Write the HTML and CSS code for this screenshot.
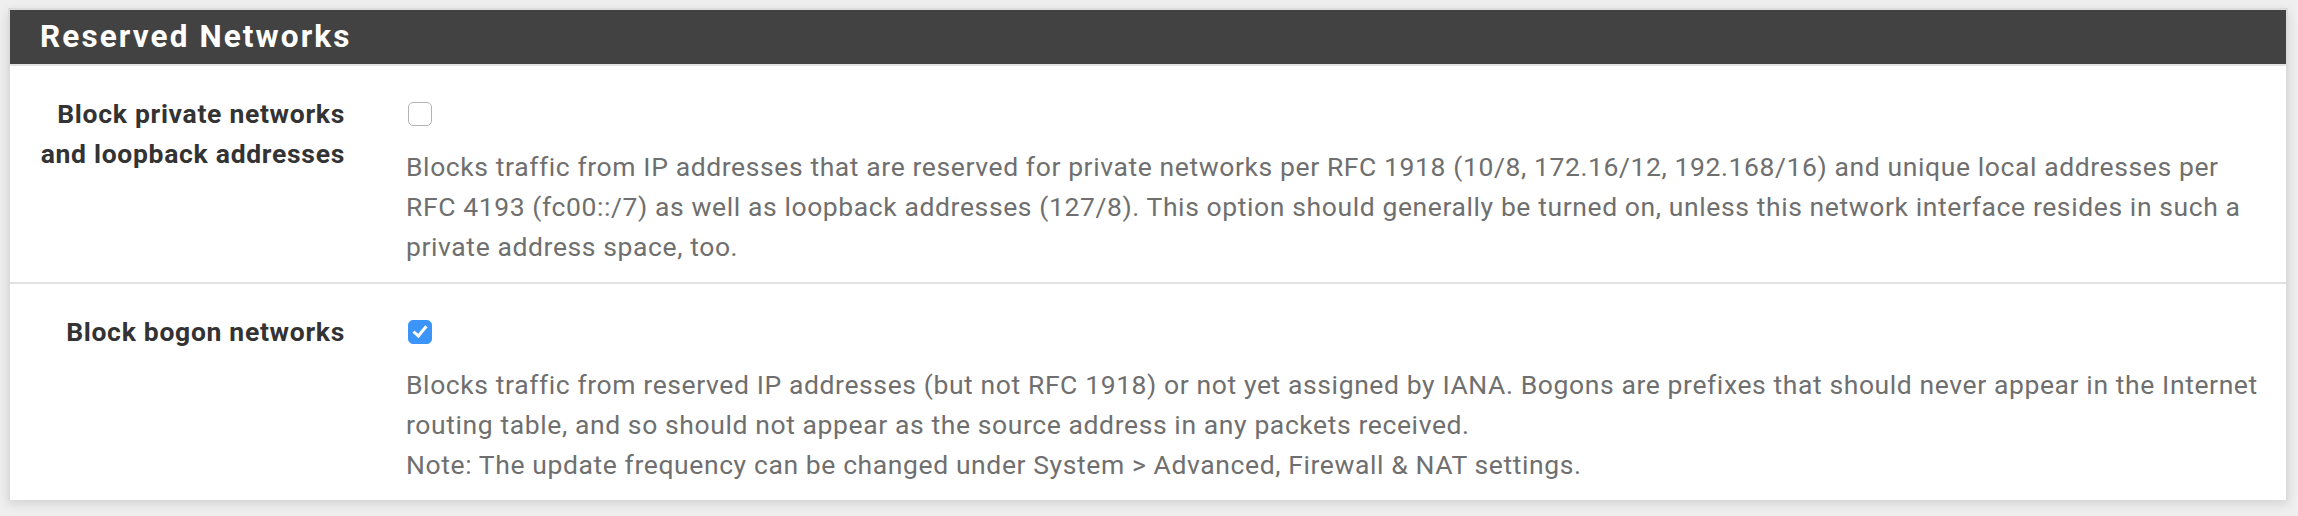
FILE: index.html
```html
<html>
<head>
    <title>Reserved Networks</title>
    <link rel="stylesheet" href="styles.css">
</head>
<body>
    <div class="panel">
        <div class="panel-heading">
            <h2 class="panel-title">Reserved Networks</h2>
        </div>
        <div class="panel-body">
            <!-- Private networks -->
            <div class="form-group">
                <label class="control-label" for="blockpriv">Block private networks and loopback addresses</label>
                <div class="field">
                    <div class="check-line">
                        <input type="checkbox" id="blockpriv" name="blockpriv">
                    </div>
                    <span class="help-block">Blocks traffic from IP addresses that are reserved for private networks per RFC 1918 (10/8, 172.16/12, 192.168/16) and unique local addresses per RFC 4193 (fc00::/7) as well as loopback addresses (127/8). This option should generally be turned on, unless this network interface resides in such a private address space, too.</span>
                </div>
            </div>

            <!-- Bogon networks -->
            <div class="form-group">
                <label class="control-label" for="blockbogons">Block bogon networks</label>
                <div class="field">
                    <div class="check-line">
                        <input type="checkbox" id="blockbogons" name="blockbogons" checked>
                    </div>
                    <span class="help-block">Blocks traffic from reserved IP addresses (but not RFC 1918) or not yet assigned by IANA. Bogons are prefixes that should never appear in the Internet routing table, and so should not appear as the source address in any packets received.<br>Note: The update frequency can be changed under System &gt; Advanced, Firewall &amp; NAT settings.</span>
                </div>
            </div>
        </div>
    </div>
</body>
</html>
```

FILE: styles.css
```css
body, h2 {
    margin: 0;
    padding: 0;
    box-sizing: border-box;
}

body {
    font-family: Roboto, 'Liberation Sans', sans-serif;
    background-color: #efefef;
    padding: 8px 10px 0 8px;
    height: 516px;
}

.panel {
    background-color: #fff;
    border: 2px solid #dcdcdc;
    border-bottom: none;
    box-shadow: 0 4px 10px rgba(0, 0, 0, 0.12);
}

.panel-heading {
    height: 54px;
    background-color: #424242;
    border-bottom: 2px solid #e2e2e2;
    display: flex;
    align-items: center;
    padding-left: 30px;
}

.panel-title {
    color: #fff;
    font-size: 31.5px;
    font-weight: bold;
    line-height: 1;
    letter-spacing: 2.1px;
}

.form-group {
    display: grid;
    grid-template-columns: 305px 1fr;
    column-gap: 61px;
    padding: 28px 20px 15px 30px;
}

.form-group + .form-group {
    border-top: 2px solid #e2e2e2;
}

.control-label {
    font-size: 26.5px;
    font-weight: bold;
    line-height: 40px;
    letter-spacing: 0.7px;
    color: #333;
    text-align: right;
}

.check-line {
    height: 40px;
    display: flex;
    align-items: center;
    margin-bottom: 13px;
}

.check-line input {
    appearance: none;
    -webkit-appearance: none;
    margin: 0 0 0 2px;
    width: 24px;
    height: 24px;
    border: 1.5px solid #b4b4b4;
    border-radius: 5px;
    background-color: #fff;
    display: grid;
    place-content: center;
}

.check-line input:checked {
    background-color: #3b94f7;
    border-color: #3b94f7;
}

.check-line input:checked::before {
    content: "";
    width: 5px;
    height: 11px;
    border-right: 3px solid #fff;
    border-bottom: 3px solid #fff;
    transform: translateY(-2px) rotate(40deg);
}

.help-block {
    display: block;
    font-size: 26.5px;
    line-height: 40px;
    letter-spacing: 0.6px;
    color: #6f6f6f;
}
```
